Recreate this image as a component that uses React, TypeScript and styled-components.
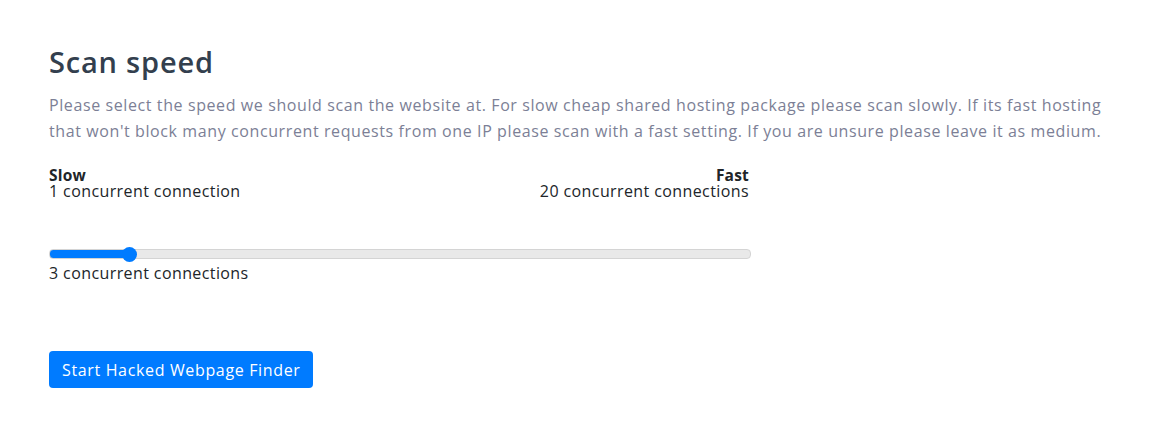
import { useState } from 'react'
import styled, { createGlobalStyle } from 'styled-components'

const GlobalStyle = createGlobalStyle`
  body {
    margin: 0;
    background: #ffffff;
    font-family: 'Open Sans', 'Liberation Sans', sans-serif;
  }
`

const Page = styled.div`
  padding: 44px 49px 0;
`

const Title = styled.h2`
  margin: 0;
  font-size: 29px;
  font-weight: 600;
  line-height: 36px;
  letter-spacing: 0.8px;
  color: #333f4e;
`

const Lead = styled.p`
  margin: 12px 0 0;
  font-size: 16px;
  line-height: 26px;
  color: #7c7f96;
  letter-spacing: 0.6px;
`

const SliderBlock = styled.div`
  width: 700px;
  margin-top: 23px;
`

const Ends = styled.div`
  display: flex;
  justify-content: space-between;
`

const End = styled.div<{ $right?: boolean }>`
  text-align: ${({ $right }) => ($right ? 'right' : 'left')};
  font-size: 16px;
  line-height: 16px;
  letter-spacing: 0.4px;
  color: #212529;
`

const EndName = styled.div`
  font-size: 15.5px;
  font-weight: 700;
  letter-spacing: 0.2px;
`

const Range = styled.input`
  -webkit-appearance: none;
  appearance: none;
  display: block;
  width: 100%;
  height: 8px;
  margin: 50px 0 0;
  border: 1px solid #d4d4d4;
  border-radius: 4px;
  outline: none;

  &::-webkit-slider-thumb {
    -webkit-appearance: none;
    width: 15px;
    height: 15px;
    border-radius: 50%;
    background: #007bff;
    border: none;
    cursor: pointer;
  }
`

const Current = styled.div`
  margin-top: 5px;
  font-size: 16px;
  line-height: 18px;
  letter-spacing: 0.4px;
  color: #212529;
`

const StartButton = styled.button`
  margin-top: 69px;
  height: 37px;
  padding: 0 13px;
  border: none;
  border-radius: 4px;
  background: #007bff;
  color: #ffffff;
  font-family: inherit;
  font-size: 16px;
  letter-spacing: 0.65px;
  cursor: pointer;
`

export default function App() {
  const [speed, setSpeed] = useState(3)
  const pct = ((speed - 1) / 19) * 100

  return (
    <>
      <GlobalStyle />
      <Page>
        <Title>Scan speed</Title>
        <Lead>
          Please select the speed we should scan the website at. For slow cheap shared hosting package please scan
          slowly. If its fast hosting that won't block many concurrent requests from one IP please scan with a fast
          setting. If you are unsure please leave it as medium.
        </Lead>
        <SliderBlock>
          <Ends>
            <End>
              <EndName>Slow</EndName>
              1 concurrent connection
            </End>
            <End $right>
              <EndName>Fast</EndName>
              20 concurrent connections
            </End>
          </Ends>
          <Range
            type="range"
            min={1}
            max={20}
            value={speed}
            onChange={(e) => setSpeed(Number(e.target.value))}
            style={{ background: `linear-gradient(to right, #007bff ${pct}%, #e9e9e9 ${pct}%)` }}
          />
          <Current>{speed} concurrent connections</Current>
        </SliderBlock>
        <StartButton>Start Hacked Webpage Finder</StartButton>
      </Page>
    </>
  )
}
